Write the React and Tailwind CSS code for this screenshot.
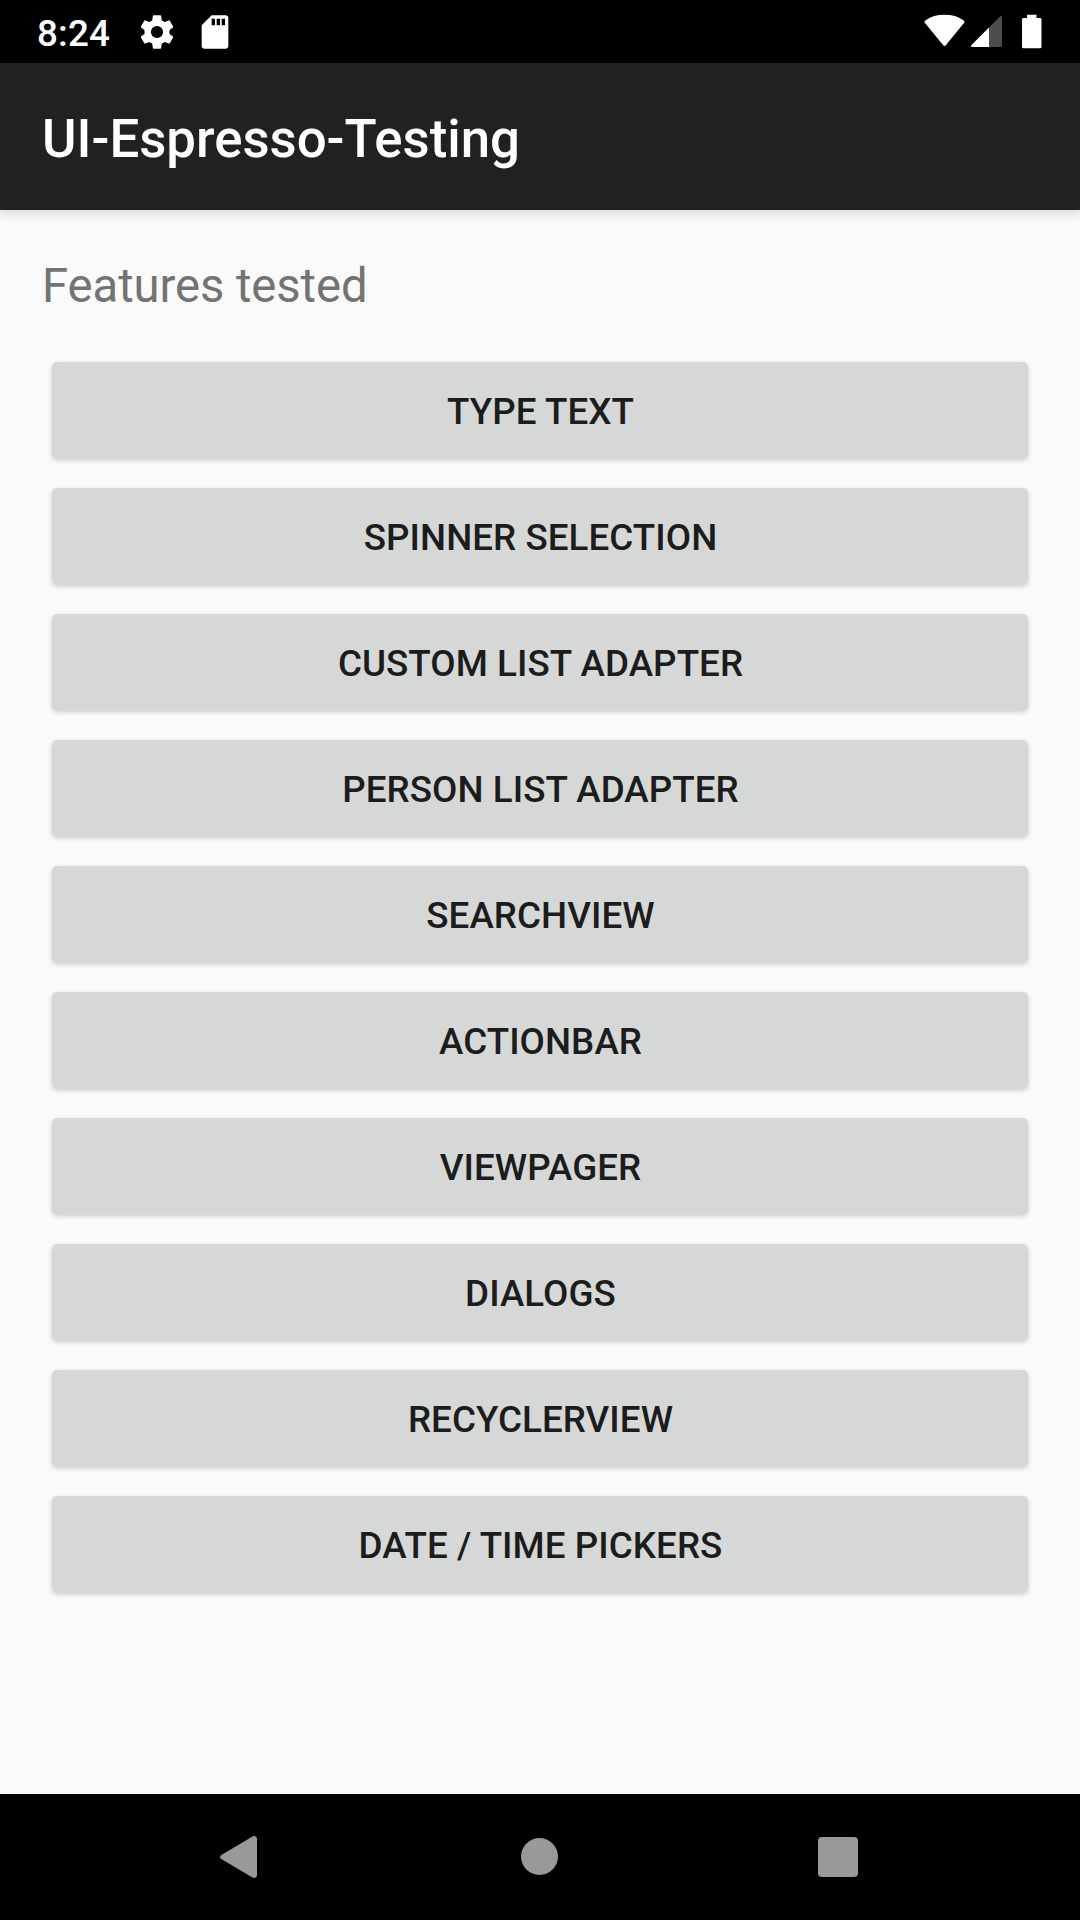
const FEATURES = [
  "TYPE TEXT",
  "SPINNER SELECTION",
  "CUSTOM LIST ADAPTER",
  "PERSON LIST ADAPTER",
  "SEARCHVIEW",
  "ACTIONBAR",
  "VIEWPAGER",
  "DIALOGS",
  "RECYCLERVIEW",
  "DATE / TIME PICKERS",
];

function StatusBar() {
  return (
    <div className="flex h-[63px] shrink-0 items-center bg-black pl-[37px] pr-[38px] text-white">
      <span className="w-[100px] pt-[4px] text-[36.75px] leading-[43px] font-medium tracking-[0.15px]">8:24</span>
      <svg className="h-[40px] w-[40px]" viewBox="0 0 24 24" fill="currentColor">
        <path d="M19.43 12.98c.04-.32.07-.64.07-.98s-.03-.66-.07-.98l2.11-1.65c.19-.15.24-.42.12-.64l-2-3.46c-.12-.22-.39-.3-.61-.22l-2.49 1c-.52-.4-1.08-.73-1.69-.98l-.38-2.65C14.46 2.18 14.25 2 14 2h-4c-.25 0-.46.18-.49.42l-.38 2.65c-.61.25-1.17.59-1.69.98l-2.49-1c-.23-.09-.49 0-.61.22l-2 3.46c-.13.22-.07.49.12.64l2.11 1.65c-.04.32-.07.65-.07.98s.03.66.07.98l-2.11 1.65c-.19.15-.24.42-.12.64l2 3.46c.12.22.39.3.61.22l2.49-1c.52.4 1.08.73 1.69.98l.38 2.65c.03.24.24.42.49.42h4c.25 0 .46-.18.49-.42l.38-2.65c.61-.25 1.17-.59 1.69-.98l2.49 1c.23.09.49 0 .61-.22l2-3.46c.12-.22.07-.49-.12-.64l-2.11-1.65zM12 15.65a3.65 3.65 0 1 1 0-7.3 3.65 3.65 0 0 1 0 7.3z" />
      </svg>
      <svg className="ml-[18px] h-[40px] w-[40px]" viewBox="0 0 24 24" fill="currentColor">
        <path d="M18.4 2H10L4 8v12.400c0 .9.700 1.600 1.600 1.600h12.800c.9 0 1.600-.7 1.600-1.600V3.600c0-.9-.7-1.600-1.600-1.600zM12 8h-2V4h2zm3 0h-2V4h2zm3 0h-2V4h2z" />
      </svg>
      <svg className="ml-auto h-[32px] w-[41px] -translate-y-[1.5px]" viewBox="0 0 41 32" fill="currentColor">
        <path d="M1 8.400C.2 7.800.3 6.700 1 6.200 6.500 2.200 13.200 0 20.500 0S34.500 2.200 40 6.200c.7.5.8 1.600 0 2.200L21.800 30.700c-.7.9-1.900.9-2.600 0z" />
      </svg>
      <svg className="ml-[6px] h-[31px] w-[32px]" viewBox="0 0 32 31" fill="currentColor">
        <path d="M29 .6c.9-.9 2-.6 2 .8V29.800c0 .7-.5 1.200-1.200 1.200H1.400C0 31-.3 29.900.6 29z" fill="#4d4d4d" />
        <path d="M18 11.600V31H1.400C0 31-.3 29.900.6 29z" />
      </svg>
      <svg className="ml-[19px] h-[34px] w-[20px] -translate-y-[0.5px]" viewBox="0 0 20 34" fill="currentColor">
        <path d="M5 0h9.500v3.500H18c.8 0 1.500.6 1.500 1.400v27.700c0 .8-.7 1.400-1.500 1.400H1.500C.7 34 0 33.400 0 32.600V4.900c0-.8.700-1.400 1.500-1.400H5z" />
      </svg>
    </div>
  );
}

function NavigationBar() {
  return (
    <nav className="flex h-[126px] shrink-0 items-center bg-black pl-[220px] text-[#999999]">
      <svg className="h-[42px] w-[37px]" viewBox="0 0 37 42" fill="currentColor">
        <path d="M32.500.5C34.500-.6 37 .5 37 3v36c0 2.500-2.500 3.600-4.500 2.500L1.300 23.100c-1.700-1-1.700-3.200 0-4.200z" />
      </svg>
      <div className="mb-px ml-[264px] h-[37px] w-[37px] rounded-full bg-[#999999]" />
      <div className="ml-[260px] h-[40px] w-[40px] rounded-[4px] bg-[#999999]" />
    </nav>
  );
}

export default function App() {
  return (
    <div className="flex h-[1920px] w-[1080px] flex-col bg-[#fafafa] font-['Roboto',sans-serif]">
      <StatusBar />
      <header className="flex h-[147px] shrink-0 items-center bg-[#212121] pl-[42px] pt-[5px] shadow-[0_2px_10px_2px_rgba(0,0,0,0.12)]">
        <h1 className="text-[52.75px] leading-[62px] font-medium text-white">UI-Espresso-Testing</h1>
      </header>
      <main className="flex grow flex-col pl-[51.5px] pr-[52px]">
        <h2 className="mt-[48px] -ml-[9.500px] text-[47.25px] leading-[56px] tracking-[-0.08px] text-[#737373]">Features tested</h2>
        <div className="mt-[48px] flex flex-col gap-[30px]">
          {FEATURES.map((label) => (
            <button
              key={label}
              className="flex h-[96px] items-center justify-center rounded-[5px] bg-[#d6d8d7] pt-[2px] pl-[1.5px] text-[36.75px] leading-[43px] font-medium tracking-[0.06px] text-[#1c1c1c] shadow-[0_2px_5px_rgba(0,0,0,0.2)]"
            >
              {label}
            </button>
          ))}
        </div>
      </main>
      <NavigationBar />
    </div>
  );
}
